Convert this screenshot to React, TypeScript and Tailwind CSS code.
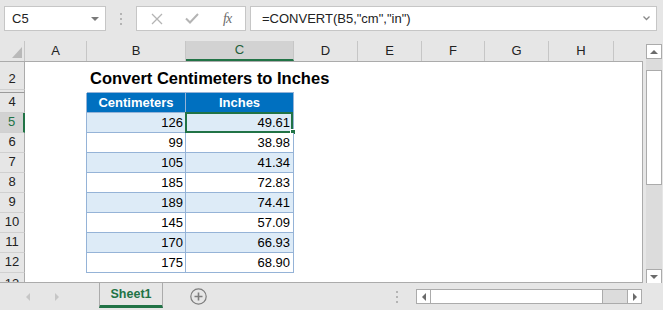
import React from "react";

const columns = [
  { label: "A", w: "w-[62px]" },
  { label: "B", w: "w-[99px]" },
  { label: "C", w: "w-[108px]", active: true },
  { label: "D", w: "w-[64px]" },
  { label: "E", w: "w-[64px]" },
  { label: "F", w: "w-[63px]" },
  { label: "G", w: "w-[64px]" },
  { label: "H", w: "w-[65px]" },
];

const rows: [number, number, string][] = [
  [5, 126, "49.61"],
  [6, 99, "38.98"],
  [7, 105, "41.34"],
  [8, 185, "72.83"],
  [9, 189, "74.41"],
  [10, 145, "57.09"],
  [11, 170, "66.93"],
  [12, 175, "68.90"],
];

const RowHead = ({ n, active }: { n?: number; active?: boolean }) => (
  <div
    className={`w-[25px] h-full shrink-0 flex items-end justify-center pb-[1px] text-[13px] border-b border-[#d0d0d0] ${
      active
        ? "bg-[#d2d2d2] text-[#217346] border-r-2 border-r-[#217346]"
        : "bg-[#e6e6e6] text-[#222] border-r border-r-[#ababab]"
    }`}
  >
    {n}
  </div>
);

const Triangle = ({ dir, color }: { dir: "up" | "down" | "left" | "right"; color: string }) => {
  const pts = {
    up: "0,5 4,1 8,5",
    down: "0,1 8,1 4,5",
    left: "5,0 5,8 1,4",
    right: "1,0 1,8 5,4",
  }[dir];
  const size = dir === "up" || dir === "down" ? { w: 8, h: 6 } : { w: 6, h: 8 };
  return (
    <svg width={size.w} height={size.h} viewBox={`0 0 ${size.w} ${size.h}`}>
      <polygon points={pts} fill={color} />
    </svg>
  );
};

const Dots = () => (
  <div className="flex flex-col gap-[3px]">
    <span className="w-[2px] h-[2px] bg-[#b4b4b4]" />
    <span className="w-[2px] h-[2px] bg-[#b4b4b4]" />
    <span className="w-[2px] h-[2px] bg-[#b4b4b4]" />
  </div>
);

export default function App() {
  return (
    <div className="w-[663px] h-[310px] bg-[#e6e6e6] flex flex-col overflow-hidden font-['Liberation_Sans',Arial,sans-serif] text-[13px] text-[#222]">
      {/* formula bar */}
      <div className="h-[41px] shrink-0 flex items-start pt-[6px]">
        <div className="ml-[4px] w-[102px] h-[25px] bg-white border border-[#c6c6c6] flex items-center justify-between pl-[7px] pr-[6px]">
          <span>C5</span>
          <Triangle dir="down" color="#7a7a7a" />
        </div>
        <div className="w-[30px] h-[25px] flex items-center justify-center">
          <Dots />
        </div>
        <div className="w-[110px] h-[25px] bg-white border border-[#c6c6c6] flex items-center">
          <svg width="12" height="12" viewBox="0 0 12 12" className="ml-[14px]">
            <path d="M1 1 L11 11 M11 1 L1 11" stroke="#b4b4b4" strokeWidth="1.3" />
          </svg>
          <svg width="14" height="11" viewBox="0 0 14 11" className="ml-[22px]">
            <path d="M1 5.5 L5 9.5 L13 1" stroke="#b4b4b4" strokeWidth="2" fill="none" />
          </svg>
          <span className="ml-[24px] italic font-['Liberation_Serif',serif] text-[14px] text-[#6b6b6b] tracking-[-1px]">
            fx
          </span>
        </div>
        <div className="ml-[4px] w-[407px] h-[25px] bg-white border border-[#c6c6c6] flex items-center justify-between pl-[11px] pr-[6px]">
          <span>=CONVERT(B5,"cm","in")</span>
          <svg width="7" height="5" viewBox="0 0 7 5">
            <path d="M0.5 0.5 L3.5 3.5 L6.5 0.5" stroke="#8a8a8a" strokeWidth="1.3" fill="none" />
          </svg>
        </div>
      </div>

      {/* sheet area */}
      <div className="h-[242px] shrink-0 flex">
        <div className="w-[643px] flex flex-col">
          {/* column headers */}
          <div className="h-[21px] shrink-0 flex border-b border-[#ababab]">
            <div className="w-[25px] shrink-0 border-r border-[#c6c6c6] flex items-end justify-end pr-[2px] pb-[3px]">
              <svg width="10" height="11" viewBox="0 0 10 11">
                <polygon points="10,0 10,11 0,11" fill="#b9b9b9" />
              </svg>
            </div>
            {columns.map((c) => (
              <div
                key={c.label}
                className={`${c.w} shrink-0 flex items-center justify-center border-r border-r-[#c6c6c6] text-[13px] ${
                  c.active ? "bg-[#d2d2d2] text-[#1f5f3b] border-b-2 border-b-[#217346]" : ""
                }`}
              >
                {c.label}
              </div>
            ))}
          </div>

          {/* grid body */}
          <div className="flex-1 flex flex-col bg-white border-r border-b border-[#ababab] overflow-hidden">
            {/* row 2 */}
            <div className="h-[28px] shrink-0 flex">
              <RowHead n={2} />
              <div className="w-[62px] shrink-0" />
              <div className="flex items-end pl-[3px] pb-[4px] whitespace-nowrap font-bold text-[16.5px] text-black leading-none">
                Convert Centimeters to Inches
              </div>
            </div>
            {/* hidden row 3 */}
            <div className="h-[3px] shrink-0 flex">
              <div className="w-[25px] h-full shrink-0 bg-[#e6e6e6] border-r border-[#ababab] border-b border-b-[#9a9a9a]" />
              <div className="w-[62px] shrink-0" />
              <div className="w-[207px] shrink-0 border-b border-[#95b3d7]" />
            </div>
            {/* row 4 header */}
            <div className="h-[20px] shrink-0 flex">
              <RowHead n={4} />
              <div className="w-[62px] shrink-0 border-r border-[#95b3d7]" />
              <div className="w-[99px] shrink-0 bg-[#0070c0] border-r border-b border-[#95b3d7] flex items-center justify-center text-white font-bold">
                Centimeters
              </div>
              <div className="w-[108px] shrink-0 bg-[#0070c0] border-r border-b border-[#95b3d7] flex items-center justify-center text-white font-bold">
                Inches
              </div>
            </div>
            {rows.map(([n, cm, inch], i) => {
              const bg = i % 2 === 0 ? "bg-[#ddebf7]" : "bg-white";
              return (
                <div key={n} className="h-[20px] shrink-0 flex">
                  <RowHead n={n} active={n === 5} />
                  <div className="w-[62px] shrink-0 border-r border-[#95b3d7]" />
                  <div className={`w-[99px] shrink-0 ${bg} border-r border-b border-[#95b3d7] flex items-center justify-end pr-[2px] text-black`}>
                    {cm}
                  </div>
                  <div className={`relative w-[108px] shrink-0 ${bg} border-r border-b border-[#95b3d7] flex items-center justify-end pr-[3px] text-black`}>
                    {inch}
                    {n === 5 && (
                      <>
                        <div className="absolute -top-[1px] -left-[1px] right-0 -bottom-[1px] border-2 border-[#217346]" />
                        <div className="absolute -right-[3px] -bottom-[3px] w-[6px] h-[6px] bg-[#217346] border border-white" />
                      </>
                    )}
                  </div>
                </div>
              );
            })}
            {/* row 13 (cut off) */}
            <div className="flex-1 flex">
              <div className="w-[25px] shrink-0 bg-[#e6e6e6] border-r border-[#ababab] flex justify-center pt-[3px] text-[13px] leading-[15px]">
                13
              </div>
            </div>
          </div>
        </div>

        {/* vertical scrollbar */}
        <div className="flex-1 flex flex-col items-center pt-[3px] pl-[2px]">
          <div className="w-[16px] h-[15px] shrink-0 bg-white border border-[#ababab] flex items-center justify-center">
            <Triangle dir="up" color="#6b6b6b" />
          </div>
          <div className="w-[16px] flex-1 bg-[#dcdcdc] pt-[11px]">
            <div className="h-[115px] bg-white border border-[#ababab]" />
          </div>
          <div className="w-[16px] h-[14px] shrink-0 bg-white border border-[#ababab] border-b-0 flex items-center justify-center">
            <Triangle dir="down" color="#6b6b6b" />
          </div>
        </div>
      </div>

      {/* sheet tabs bar */}
      <div className="flex-1 flex items-start">
        <div className="w-[99px] h-[27px] shrink-0 flex items-center pl-[25px] gap-[23px]">
          <Triangle dir="left" color="#c6c6c6" />
          <Triangle dir="right" color="#c6c6c6" />
        </div>
        <div className="w-[64px] h-[25px] shrink-0 border-x border-[#ababab] border-b-[3px] border-b-[#217346] flex items-center justify-center font-bold text-[12.5px] text-[#217346]">
          Sheet1
        </div>
        <div className="w-[68px] h-[27px] shrink-0 flex items-center justify-center pr-[16px] pl-[18px]">
          <svg width="17" height="17" viewBox="0 0 17 17">
            <circle cx="8.5" cy="8.5" r="7.7" fill="none" stroke="#7d7d7d" strokeWidth="1.2" />
            <path d="M8.5 4.5 V12.5 M4.5 8.5 H12.5" stroke="#7d7d7d" strokeWidth="1.6" />
          </svg>
        </div>
        <div className="w-[185px] h-[27px] shrink-0 flex items-center justify-end pr-[18px]">
          <Dots />
        </div>
        <div className="h-[27px] flex items-center">
          <div className="w-[226px] h-[15px] flex border border-[#ababab] bg-[#dcdcdc]">
            <div className="w-[14px] shrink-0 bg-white border-r border-[#ababab] flex items-center justify-center">
              <Triangle dir="left" color="#6b6b6b" />
            </div>
            <div className="w-[172px] shrink-0 bg-white border-r border-[#ababab]" />
            <div className="flex-1" />
            <div className="w-[14px] shrink-0 bg-white border-l border-[#ababab] flex items-center justify-center">
              <Triangle dir="right" color="#6b6b6b" />
            </div>
          </div>
        </div>
      </div>
    </div>
  );
}
